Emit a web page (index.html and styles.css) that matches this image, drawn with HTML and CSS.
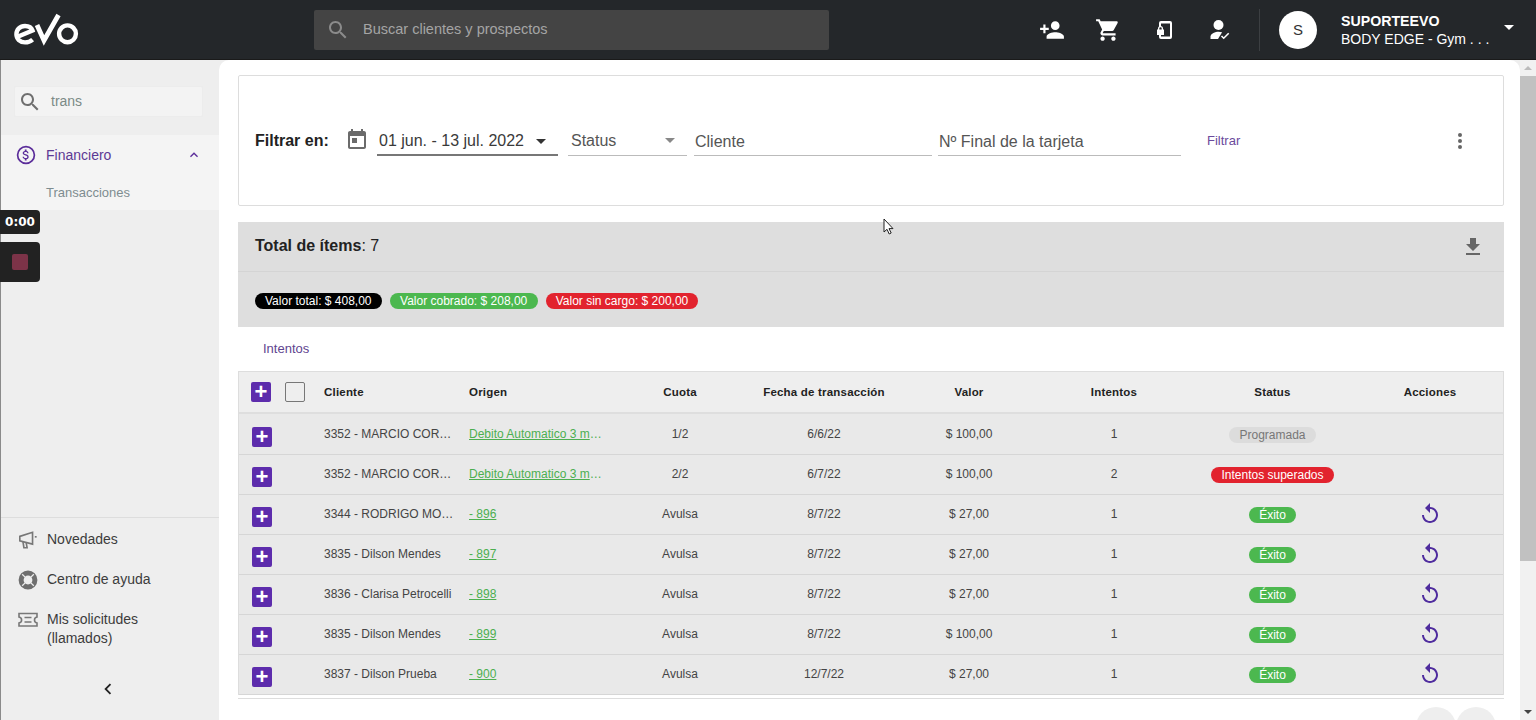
FILE: index.html
```html
<!DOCTYPE html>
<html lang="es">
<head>
<meta charset="utf-8">
<title>EVO - Transacciones</title>
<link rel="stylesheet" href="styles.css">
</head>
<body>
<header class="topbar">
  <svg class="logo" width="66" height="34" viewBox="0 0 66 34" fill="none" stroke="#fff" stroke-width="4.4">
    <path d="M4 25 L19.5 18.5 C18.5 15.5 15.5 14 12 14 C7 14 3.4 17.5 3.4 22.3 C3.4 27 7 30.4 12 30.4 C14.8 30.4 17.3 29.6 19.6 27.6"/>
    <path d="M24 13 L31 28.5 L45.5 3" stroke-width="4.8"/>
    <circle cx="54.5" cy="21.8" r="8.4"/>
  </svg>
  <div class="global-search">
    <svg class="ic" width="24" height="24" viewBox="0 0 24 24" fill="#8b8b8b"><path d="M15.5 14h-.79l-.28-.27C15.41 12.59 16 11.11 16 9.5 16 5.91 13.09 3 9.5 3S3 5.91 3 9.5 5.91 16 9.5 16c1.61 0 3.09-.59 4.23-1.57l.27.28v.79l5 4.99L20.49 19l-4.99-5zm-6 0C7.01 14 5 11.99 5 9.5S7.01 5 9.5 5 14 7.01 14 9.5 11.99 14 9.5 14z"/></svg>
    <span>Buscar clientes y prospectos</span>
  </div>
  <div class="top-actions">
    <svg width="26" height="26" viewBox="0 0 24 24" fill="#fff"><path d="M15 12c2.21 0 4-1.79 4-4s-1.79-4-4-4-4 1.79-4 4 1.79 4 4 4zm-9-2V7H4v3H1v2h3v3h2v-3h3v-2H6zm9 4c-2.67 0-8 1.34-8 4v2h16v-2c0-2.66-5.33-4-8-4z"/></svg>
    <svg width="26" height="26" viewBox="0 0 24 24" fill="#fff"><path d="M7 18c-1.1 0-1.99.9-1.99 2S5.9 22 7 22s2-.9 2-2-.9-2-2-2zM1 2v2h2l3.6 7.59-1.35 2.45c-.16.28-.25.61-.25.96 0 1.1.9 2 2 2h12v-2H7.42c-.14 0-.25-.11-.25-.25l.03-.12.9-1.63h7.45c.75 0 1.41-.41 1.75-1.03l3.58-6.49c.08-.14.12-.31.12-.48 0-.55-.45-1-1-1H5.21l-.94-2H1zm16 16c-1.1 0-1.99.9-1.99 2s.89 2 1.99 2 2-.9 2-2-.9-2-2-2z"/></svg>
    <svg width="26" height="26" viewBox="0 0 26 26" fill="#fff"><path fill-rule="evenodd" d="M10 4h9a2 2 0 0 1 2 2v14a2 2 0 0 1-2 2h-9a2 2 0 0 1-2-2v-2h2v1.5h9v-13h-9V10H8V6a2 2 0 0 1 2-2z"/><path d="M7 12.5v-1a2.5 2.5 0 0 1 5 0v1h1V18H6v-5.5zm1.3 0h2.4v-1a1.2 1.2 0 0 0-2.4 0z"/></svg>
    <svg width="26" height="26" viewBox="0 0 26 26" fill="#fff"><circle cx="11.5" cy="8" r="5"/><path d="M3.5 22v-2.5c0-3 5-4.8 8-4.8 1.2 0 2.4.2 3.6.6L11 22z"/><path d="M14.5 19l2.2 2.2 5-5" fill="none" stroke="#fff" stroke-width="1.6"/></svg>
  </div>
  <div class="top-sep"></div>
  <div class="avatar">S</div>
  <div class="user">
    <strong>SUPORTEEVO</strong>
    <span>BODY EDGE - Gym . . .</span>
  </div>
  <i class="caret caret-white"></i>
</header>

<div class="shell">
  <aside class="sidebar">
    <div class="side-search">
      <svg width="24" height="24" viewBox="0 0 24 24" fill="#6f6f6f"><path d="M15.5 14h-.79l-.28-.27C15.41 12.59 16 11.11 16 9.5 16 5.91 13.09 3 9.5 3S3 5.91 3 9.5 5.91 16 9.5 16c1.61 0 3.09-.59 4.23-1.57l.27.28v.79l5 4.99L20.49 19l-4.99-5zm-6 0C7.01 14 5 11.99 5 9.5S7.01 5 9.5 5 14 7.01 14 9.5 11.99 14 9.5 14z"/></svg>
      <span>trans</span>
    </div>
    <nav class="side-group">
      <div class="side-head">
        <svg width="20" height="20" viewBox="0 0 20 20" fill="none"><circle cx="10" cy="10" r="8.4" stroke="#5b2d9a" stroke-width="1.7"/><path transform="translate(2.8 2.8) scale(.6)" fill="#5b2d9a" d="M11.8 10.9c-2.27-.59-3-1.2-3-2.15 0-1.09 1.01-1.85 2.7-1.85 1.78 0 2.44.85 2.5 2.1h2.21c-.07-1.72-1.12-3.3-3.21-3.81V3h-3v2.16c-1.94.42-3.5 1.68-3.5 3.61 0 2.31 1.91 3.46 4.7 4.13 2.5.6 3 1.48 3 2.41 0 .69-.49 1.79-2.7 1.79-2.06 0-2.87-.92-2.98-2.1h-2.2c.12 2.19 1.76 3.42 3.68 3.83V21h3v-2.15c1.95-.37 3.5-1.5 3.5-3.55 0-2.84-2.43-3.81-4.7-4.4z"/></svg>
        <span class="side-title">Financiero</span>
        <svg class="side-chevron" width="16" height="16" viewBox="0 0 24 24" fill="#5b2d9a"><path d="M12 8l-6 6 1.41 1.41L12 10.83l4.59 4.58L18 14z"/></svg>
      </div>
      <div class="side-sub">Transacciones</div>
    </nav>
    <div class="side-foot">
      <div class="side-link">
        <svg viewBox="0 0 22 22" fill="none" stroke="#777" stroke-width="1.8"><path d="M2 7 L16 2.5 V15.5 L2 12 Z"/><path d="M5.5 13 L6.5 19.5 H10 L9 14"/><path d="M18.5 7.5 H20.5"/></svg>
        <span>Novedades</span>
      </div>
      <div class="side-link">
        <svg viewBox="0 0 20 20" fill="none"><circle cx="10" cy="10" r="6.9" stroke="#6f6f6f" stroke-width="5"/><path d="M4.2 4.2 L7.6 7.6 M15.8 4.2 L12.4 7.6 M4.2 15.8 L7.6 12.4 M15.8 15.8 L12.4 12.4" stroke="#eee" stroke-width="1.3"/></svg>
        <span>Centro de ayuda</span>
      </div>
      <div class="side-link">
        <svg viewBox="0 0 20 20" fill="none" stroke="#777" stroke-width="1.6"><path d="M1 3.5 H19 V7 C17 7.4 16.5 8.6 16.5 10 C16.5 11.4 17 12.6 19 13 V16 H1 V13 C3 12.6 3.6 11.4 3.6 10 C3.6 8.6 3 7.4 1 7 Z"/><path d="M6.5 7.5 H13.5 M6.5 12 H13.5"/></svg>
        <span>Mis solicitudes<br>(llamados)</span>
      </div>
      <svg class="collapse" width="22" height="22" viewBox="0 0 24 24" fill="#222"><path d="M15.41 7.41L14 6l-6 6 6 6 1.41-1.41L10.83 12z"/></svg>
    </div>
  </aside>

  <main class="content">
    <section class="filter-card">
      <strong class="filter-label">Filtrar en:</strong>
      <svg class="cal" width="24" height="24" viewBox="0 0 24 24" fill="#6b6b6b"><path d="M19 3h-1V1h-2v2H8V1H6v2H5c-1.11 0-1.99.9-1.99 2L3 19c0 1.1.89 2 2 2h14c1.1 0 2-.9 2-2V5c0-1.1-.9-2-2-2zm0 16H5V8h14v11zM7 10h5v5H7z"/></svg>
      <div class="field field-date"><span>01 jun. - 13 jul. 2022</span><i class="caret caret-dark"></i></div>
      <div class="field field-status"><span>Status</span><i class="caret caret-grey"></i></div>
      <div class="field field-client"><span>Cliente</span></div>
      <div class="field field-card"><span>Nº Final de la tarjeta</span></div>
      <span class="filter-btn">Filtrar</span>
      <svg class="more" width="24" height="24" viewBox="0 0 24 24" fill="#666"><circle cx="12" cy="6" r="2"/><circle cx="12" cy="12" r="2"/><circle cx="12" cy="18" r="2"/></svg>
    </section>

    <section class="summary">
      <div class="summary-top">
        <span class="total"><strong>Total de ítems</strong>: 7</span>
        <svg width="24" height="24" viewBox="0 0 24 24" fill="#666"><path d="M19 9h-4V3H9v6H5l7 7 7-7zM5 18v2h14v-2H5z"/></svg>
      </div>
      <div class="summary-tags">
        <span class="pill pill-black">Valor total: $ 408,00</span>
        <span class="pill pill-green">Valor cobrado: $ 208,00</span>
        <span class="pill pill-red">Valor sin cargo: $ 200,00</span>
      </div>
    </section>

    <div class="tabs">Intentos</div>

    <section class="grid">
      <div class="row row-head">
        <div class="cell cell-ctl"><b class="plus">+</b><i class="check"></i></div>
        <div class="cell">Cliente</div>
        <div class="cell">Origen</div>
        <div class="cell c">Cuota</div>
        <div class="cell c">Fecha de transacción</div>
        <div class="cell c">Valor</div>
        <div class="cell c">Intentos</div>
        <div class="cell c">Status</div>
        <div class="cell c">Acciones</div>
      </div>
      <div class="row">
        <div class="cell cell-ctl"><b class="plus">+</b></div>
        <div class="cell">3352 - MARCIO COR…</div>
        <div class="cell"><a>Debito Automatico 3 m</a>…</div>
        <div class="cell c">1/2</div><div class="cell c">6/6/22</div><div class="cell c">$ 100,00</div><div class="cell c">1</div>
        <div class="cell c"><span class="pill pill-grey">Programada</span></div>
        <div class="cell c"></div>
      </div>
      <div class="row">
        <div class="cell cell-ctl"><b class="plus">+</b></div>
        <div class="cell">3352 - MARCIO COR…</div>
        <div class="cell"><a>Debito Automatico 3 m</a>…</div>
        <div class="cell c">2/2</div><div class="cell c">6/7/22</div><div class="cell c">$ 100,00</div><div class="cell c">2</div>
        <div class="cell c"><span class="pill pill-red">Intentos superados</span></div>
        <div class="cell c"></div>
      </div>
      <div class="row">
        <div class="cell cell-ctl"><b class="plus">+</b></div>
        <div class="cell">3344 - RODRIGO MO…</div>
        <div class="cell"><a>- 896</a></div>
        <div class="cell c">Avulsa</div><div class="cell c">8/7/22</div><div class="cell c">$ 27,00</div><div class="cell c">1</div>
        <div class="cell c"><span class="pill pill-green">Éxito</span></div>
        <div class="cell c"><svg class="replay" width="24" height="24" viewBox="0 0 24 24"><path d="M12 5V1L7 6l5 5V7c3.31 0 6 2.69 6 6s-2.69 6-6 6-6-2.69-6-6H4c0 4.42 3.58 8 8 8s8-3.58 8-8-3.58-8-8-8z"/></svg></div>
      </div>
      <div class="row">
        <div class="cell cell-ctl"><b class="plus">+</b></div>
        <div class="cell">3835 - Dilson Mendes</div>
        <div class="cell"><a>- 897</a></div>
        <div class="cell c">Avulsa</div><div class="cell c">8/7/22</div><div class="cell c">$ 27,00</div><div class="cell c">1</div>
        <div class="cell c"><span class="pill pill-green">Éxito</span></div>
        <div class="cell c"><svg class="replay" width="24" height="24" viewBox="0 0 24 24"><path d="M12 5V1L7 6l5 5V7c3.31 0 6 2.69 6 6s-2.69 6-6 6-6-2.69-6-6H4c0 4.42 3.58 8 8 8s8-3.58 8-8-3.58-8-8-8z"/></svg></div>
      </div>
      <div class="row">
        <div class="cell cell-ctl"><b class="plus">+</b></div>
        <div class="cell">3836 - Clarisa Petrocelli</div>
        <div class="cell"><a>- 898</a></div>
        <div class="cell c">Avulsa</div><div class="cell c">8/7/22</div><div class="cell c">$ 27,00</div><div class="cell c">1</div>
        <div class="cell c"><span class="pill pill-green">Éxito</span></div>
        <div class="cell c"><svg class="replay" width="24" height="24" viewBox="0 0 24 24"><path d="M12 5V1L7 6l5 5V7c3.31 0 6 2.69 6 6s-2.69 6-6 6-6-2.69-6-6H4c0 4.42 3.58 8 8 8s8-3.58 8-8-3.58-8-8-8z"/></svg></div>
      </div>
      <div class="row">
        <div class="cell cell-ctl"><b class="plus">+</b></div>
        <div class="cell">3835 - Dilson Mendes</div>
        <div class="cell"><a>- 899</a></div>
        <div class="cell c">Avulsa</div><div class="cell c">8/7/22</div><div class="cell c">$ 100,00</div><div class="cell c">1</div>
        <div class="cell c"><span class="pill pill-green">Éxito</span></div>
        <div class="cell c"><svg class="replay" width="24" height="24" viewBox="0 0 24 24"><path d="M12 5V1L7 6l5 5V7c3.31 0 6 2.69 6 6s-2.69 6-6 6-6-2.69-6-6H4c0 4.42 3.58 8 8 8s8-3.58 8-8-3.58-8-8-8z"/></svg></div>
      </div>
      <div class="row">
        <div class="cell cell-ctl"><b class="plus">+</b></div>
        <div class="cell">3837 - Dilson Prueba</div>
        <div class="cell"><a>- 900</a></div>
        <div class="cell c">Avulsa</div><div class="cell c">12/7/22</div><div class="cell c">$ 27,00</div><div class="cell c">1</div>
        <div class="cell c"><span class="pill pill-green">Éxito</span></div>
        <div class="cell c"><svg class="replay" width="24" height="24" viewBox="0 0 24 24"><path d="M12 5V1L7 6l5 5V7c3.31 0 6 2.69 6 6s-2.69 6-6 6-6-2.69-6-6H4c0 4.42 3.58 8 8 8s8-3.58 8-8-3.58-8-8-8z"/></svg></div>
      </div>
    </section>
    <div class="grid-foot"><i class="page-btn"></i><i class="page-btn"></i></div>
  </main>

  <div class="scrollbar">
    <i class="arrow-up"></i>
    <div class="thumb"></div>
    <i class="arrow-down"></i>
  </div>
</div>

<div class="rec">
  <div class="rec-time">0:00</div>
  <div class="rec-stop"><i></i></div>
</div>

<svg class="cursor" width="12" height="18" viewBox="0 0 12 18"><path d="M1 1 V14 L4 11.3 L6.2 16 L8.2 15 L6 10.6 H10 Z" fill="#fff" stroke="#222" stroke-width="1"/></svg>
</body>
</html>
```

FILE: styles.css
```css
* { box-sizing: border-box; }
html, body { margin: 0; height: 720px; overflow: hidden; }
body { font-family: "Liberation Sans", Arial, sans-serif; background: #eee; color: #333; position: relative; }

.topbar { height: 60px; background: #24272a; display: flex; align-items: center; color: #fff; border-bottom: 1px solid #1a1a1a; }
.logo { margin-left: 13px; flex: none; margin-top: -1px; }
.global-search { margin-left: 235px; width: 515px; height: 40px; background: #444; border-radius: 2px; display: flex; align-items: center; padding-left: 12px; gap: 13px; color: #a5a5a5; font-size: 14.5px; }
.global-search span { margin-top: -1px; }
.top-actions { margin-left: 210px; display: flex; gap: 30px; align-items: center; }
.top-sep { width: 1px; height: 42px; background: #3c3f42; margin-left: 26px; }
.avatar { width: 38px; height: 38px; border-radius: 50%; background: #fff; color: #333; margin-left: 19px; display: flex; align-items: center; justify-content: center; font-size: 15px; }
.user { margin-left: 24px; display: flex; flex-direction: column; font-size: 14px; line-height: 18px; white-space: nowrap; width: 163px; }
.user strong { font-size: 14.2px; }
.caret { display: block; width: 0; height: 0; border-style: solid; border-color: transparent; border-width: 5px 5px 0; }
.caret-white { border-top-color: #fff; margin-top: -4px; }
.caret-dark { border-top-color: #333; }
.caret-grey { border-top-color: #888; }

.shell { display: flex; height: 660px; }

.sidebar { width: 219px; flex: none; background: #eee; border-left: 1px solid #8a8a8a; display: flex; flex-direction: column; }
.side-search { margin: 26px 16px 0 13px; height: 31px; background: #f3f3f3; border: 1px solid #ececec; border-radius: 2px; display: flex; align-items: center; padding-left: 3px; gap: 9px; font-size: 14px; color: #7b8a86; }
.side-search span { margin-top: -2px; }
.side-group { margin-top: 18px; height: 75px; background: #f4f4f4; padding-top: 10px; }
.side-head { display: flex; align-items: center; padding-left: 15px; height: 20px; }
.side-title { margin-left: 10px; font-size: 14px; color: #5d3a94; }
.side-chevron { margin-left: auto; margin-right: 17px; }
.side-sub { margin: 20px 0 0 45px; font-size: 13px; line-height: 15px; color: #7e8c90; }
.side-foot { margin-top: auto; border-top: 1px solid #ddd; padding: 12px 0 0 17px; height: 203px; display: flex; flex-direction: column; gap: 20px; }
.side-link { display: flex; gap: 9px; font-size: 14px; line-height: 19px; min-height: 20px; color: #3c3c3c; align-items: flex-start; }
.side-link svg { flex: none; width: 20px; height: 20px; }
.collapse { align-self: flex-start; margin: 10px 0 0 79px; }

.content { flex: 1; min-width: 0; background: #fff; border-radius: 10px 10px 0 0; padding: 15px 16px 0 19px; overflow: hidden; }

.filter-card { height: 131px; border: 1px solid #ddd; border-radius: 2px; background: #fff; display: flex; align-items: center; padding-left: 16px; }
.filter-label { font-size: 16px; color: #222; width: 90px; flex: none; }
.cal { margin-right: 8px; flex: none; margin-top: -2px; }
.field { display: flex; align-items: center; justify-content: space-between; height: 30px; border-bottom: 1px solid #bbb; font-size: 16px; color: #555; flex: none; padding: 0 1px; margin-top: 1px; }
.field-date { width: 181px; border-bottom: 2px solid #777; color: #3a3a3a; padding: 2px 12px 0 2px; margin-right: 10px; }
.field-status { width: 119px; padding: 0 12px 0 3px; margin-right: 7px; }
.field-client { width: 238px; margin-right: 6px; padding-top: 3px; }
.field-card { width: 243px; padding: 3px 0 0 1px; }
.filter-btn { margin-left: 26px; font-size: 13px; color: #6b4a9c; width: 241px; flex: none; }
.more { flex: none; }

.summary { margin-top: 16px; height: 105px; background: #dedede; }
.summary-top { height: 50px; border-bottom: 1px solid #d4d4d4; display: flex; align-items: center; justify-content: space-between; padding: 0 19px 1px 17px; }
.summary-top svg { margin-top: 1px; }
.total { font-size: 16px; color: #222; }
.summary-tags { display: flex; gap: 8px; padding: 21px 0 0 17px; }
.pill { display: inline-block; height: 16px; line-height: 16px; border-radius: 8px; font-size: 12px; padding: 0 10px; color: #fff; white-space: nowrap; }
.pill-black { background: #000; }
.pill-green { background: #4cb84f; }
.pill-red { background: #e2232e; }
.pill-grey { background: #dcdcdc; color: #777; }
.summary-tags .pill-green { padding: 0 10.5px; }

.tabs { height: 44px; padding: 14px 0 0 25px; font-size: 13px; line-height: 16px; color: #5f4590; }

.grid { border: 1px solid #ddd; border-bottom: 0; background: #e9e9e9; }
.row { display: grid; grid-template-columns: 85px 145px 141px 140px 148px 142px 148px 169px 146px; height: 40px; border-bottom: 1px solid #d6d6d6; padding-bottom: 2px; align-items: center; font-size: 12px; color: #444; }
.row-head { background: #eee; height: 42px; border-bottom: 2px solid #dedede; padding-bottom: 0; font-weight: 700; font-size: 11.5px; letter-spacing: .2px; color: #222; margin-bottom: 1px; }
.cell { min-width: 0; white-space: nowrap; }
.c { text-align: center; }
.cell a { color: #4caf50; text-decoration: underline; }
.cell:has(> a) { color: #4caf50; }
.cell .pill { transform: translateY(1px); }
.cell-ctl { display: flex; align-items: center; padding-left: 12px; gap: 14px; }
.plus { width: 20px; height: 20px; border-radius: 2px; background: #5d2cac; color: #fff; font: 700 22px/19px "Liberation Sans", Arial, sans-serif; text-align: center; display: block; flex: none; }
.row:not(.row-head) .plus { margin-left: 1px; margin-top: 7px; }
.check { width: 20px; height: 20px; border: 1.5px solid #777; border-radius: 2px; background: #eee; display: block; flex: none; }
.replay { display: block; margin: 0 auto; fill: #4f2c9e; }

.grid-foot { margin-top: 3px; border-top: 1px solid #ddd; display: flex; justify-content: flex-end; padding: 8px 8px 0 0; }
.page-btn { width: 40px; height: 40px; border-radius: 50%; background: #eee; display: block; }

.scrollbar { width: 16px; flex: none; background: #f1f1f1; display: flex; flex-direction: column; align-items: center; }
.arrow-up, .arrow-down { display: block; width: 0; height: 0; border-style: solid; border-color: transparent; margin: 6px 0; }
.arrow-up { border-width: 0 4px 4px; border-bottom-color: #bbb; }
.arrow-down { border-width: 4px 4px 0; border-top-color: #444; margin-top: auto; }
.thumb { width: 100%; height: 485px; background: #c1c1c1; margin-top: 0; }

.rec { position: absolute; left: 0; top: 210px; }
.rec-time { width: 40px; height: 24px; background: #222; color: #fff; border-radius: 0 4px 4px 0; font: 700 12px/24px "DejaVu Sans", sans-serif; text-align: center; }
.rec-stop { width: 40px; height: 40px; margin-top: 8px; background: #222; border-radius: 0 4px 4px 0; display: flex; align-items: center; justify-content: center; }
.rec-stop i { display: block; width: 16px; height: 16px; border-radius: 2px; background: #7c3348; }
.cursor { position: absolute; left: 883px; top: 218px; }
```
